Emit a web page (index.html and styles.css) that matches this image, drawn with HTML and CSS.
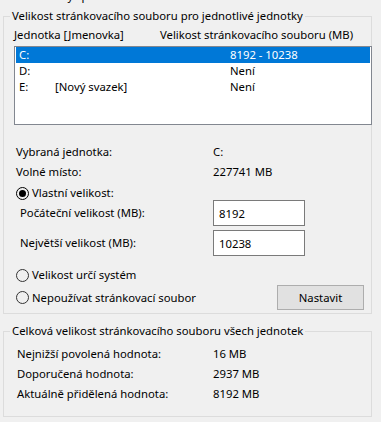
FILE: index.html
```html
<!DOCTYPE html>
<html lang="cs">
<head>
    <meta charset="UTF-8">
    <meta name="viewport" content="width=device-width, initial-scale=1.0">
    <title>Virtuální paměť</title>
    <link rel="stylesheet" href="styles.css">
</head>
<body>
    <div class="dialog">
        <!-- Řádek nahoře (useknutý) -->
        <div class="auto-row">Automaticky spravovat velikost stránkovacího souboru</div>

        <!-- Stránkovací soubor pro jednotlivé jednotky -->
        <fieldset class="group group-drives">
            <legend>Velikost stránkovacího souboru pro jednotlivé jednotky</legend>
            <div class="group-body">
                <div class="list-head">
                    <span class="col-drive">Jednotka [Jmenovka]</span>
                    <span>Velikost stránkovacího souboru (MB)</span>
                </div>
                <div class="drive-list">
                    <div class="drive-row selected">
                        <span class="col-letter">C:</span>
                        <span class="col-label"></span>
                        <span>8192 - 10238</span>
                    </div>
                    <div class="drive-row">
                        <span class="col-letter">D:</span>
                        <span class="col-label"></span>
                        <span>Není</span>
                    </div>
                    <div class="drive-row">
                        <span class="col-letter">E:</span>
                        <span class="col-label">[Nový svazek]</span>
                        <span>Není</span>
                    </div>
                </div>

                <div class="info">
                    <span>Vybraná jednotka:</span><span>C:</span>
                    <span>Volné místo:</span><span>227741 MB</span>
                </div>

                <div class="radio-row first"><span class="radio checked"></span>Vlastní velikost:</div>
                <div class="size-row first">
                    <span class="size-label">Počáteční velikost (MB):</span>
                    <input class="field" type="text" value="8192">
                </div>
                <div class="size-row">
                    <span class="size-label">Největší velikost (MB):</span>
                    <input class="field" type="text" value="10238">
                </div>

                <div class="radio-row system"><span class="radio"></span>Velikost určí systém</div>
                <div class="last-row">
                    <div class="radio-row"><span class="radio"></span>Nepoužívat stránkovací soubor</div>
                    <button class="btn">Nastavit</button>
                </div>
            </div>
        </fieldset>

        <!-- Celková velikost -->
        <fieldset class="group group-total">
            <legend>Celková velikost stránkovacího souboru všech jednotek</legend>
            <div class="group-body totals">
                <span>Nejnižší povolená hodnota:</span><span>16 MB</span>
                <span>Doporučená hodnota:</span><span>2937 MB</span>
                <span>Aktuálně přidělená hodnota:</span><span>8192 MB</span>
            </div>
        </fieldset>
    </div>
</body>
</html>
```

FILE: styles.css
```css
/* Obecné */
body {
    margin: 0;
    width: 381px;
    height: 422px;
    overflow: hidden;
    background-color: #f0f0f0;
    color: #000;
    font-family: "Noto Sans", "Open Sans", sans-serif;
    font-size: 11.3px;
    line-height: 16px;
}

.dialog {
    padding-left: 3px;
}

.auto-row {
    margin-top: -12px;
    height: 16px;
    padding-left: 4px;
    white-space: nowrap;
    overflow: hidden;
}

/* Skupiny (group box) */
.group {
    margin: 4px 0 0;
    padding: 0;
    width: 369px;
    box-sizing: border-box;
    min-inline-size: 0;
    border: 1px solid #dcdcdc;
}

.group legend {
    margin-left: 6px;
    padding: 0 2px;
    line-height: 16px;
}

.group-drives .group-body {
    padding: 3px 0 3px 10px;
}

/* Seznam jednotek */
.list-head {
    display: flex;
    white-space: nowrap;
}

.col-drive {
    width: 146px;
}

.drive-list {
    margin-top: 3px;
    margin-right: -1px;
    height: 79px;
    box-sizing: border-box;
    padding: 0 1px;
    background-color: #fff;
    border: 1px solid #828790;
}

.drive-row {
    display: flex;
    height: 16px;
    padding-left: 3px;
    white-space: nowrap;
}

.drive-row.selected {
    background-color: #0078d7;
    color: #fff;
}

.col-letter {
    width: 36px;
}

.col-label {
    width: 175px;
}

/* Údaje o jednotce */
.info {
    display: grid;
    grid-template-columns: 197px auto;
    row-gap: 4px;
    margin: 19px 0 0 2px;
}

/* Přepínače */
.radio-row {
    display: flex;
    align-items: center;
    height: 16px;
    padding-left: 2px;
    white-space: nowrap;
}

.radio-row.first {
    margin-top: 5px;
}

.radio-row.system {
    margin-top: 11px;
}

.radio {
    width: 13px;
    height: 13px;
    box-sizing: border-box;
    margin-right: 3px;
    border: 1px solid #333;
    border-radius: 50%;
    display: flex;
    align-items: center;
    justify-content: center;
}

.radio.checked {
    border-color: #000;
}

.radio.checked::after {
    content: "";
    width: 7px;
    height: 7px;
    border-radius: 50%;
    background-color: #000;
}

/* Velikosti */
.size-row {
    display: flex;
    align-items: center;
    height: 26px;
    margin-top: 4px;
}

.size-row.first {
    margin-top: -1px;
}

.size-label {
    width: 193px;
    padding-left: 6px;
}

.field {
    width: 92px;
    height: 26px;
    box-sizing: border-box;
    margin: 0;
    padding: 0 5px;
    border: 1px solid #7a7a7a;
    border-radius: 0;
    background-color: #fff;
    font: inherit;
    color: #000;
    outline: none;
}

.last-row {
    display: flex;
    align-items: center;
    justify-content: space-between;
    height: 25px;
    margin-top: 2px;
}

.btn {
    width: 87px;
    height: 25px;
    margin: 0 7px 0 0;
    padding: 0;
    background-color: #e1e1e1;
    border: 1px solid #adadad;
    border-radius: 0;
    font: inherit;
    color: #000;
}

/* Celková velikost */
.group-total {
    margin-top: 9px;
}

.totals {
    display: grid;
    grid-template-columns: 196px auto;
    line-height: 20px;
    padding: 5px 0 12px 13px;
}
```
